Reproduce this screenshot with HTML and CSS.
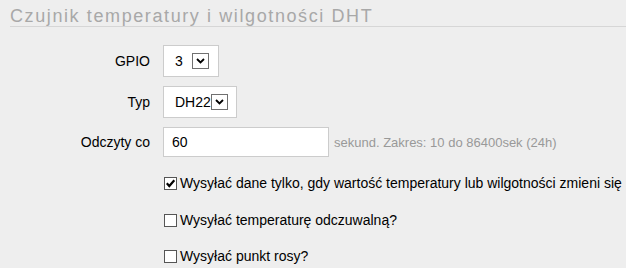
FILE: index.html
```html
<!DOCTYPE html>
<html>
<head>
	<title>Czujnik DHT</title>
	<link rel="stylesheet" href="styles.css">
</head>
<body>
	<div class="section-title">Czujnik temperatury i wilgotności DHT</div>
	<div class="form">
		<div class="form-row">
			<label class="form-label">GPIO</label>
			<div class="select select-gpio">
				<span class="select-value value-gpio">3</span>
				<span class="select-arrow">
					<svg width="9" height="6" viewBox="0 0 9 6"><path d="M1 1 L4.5 4.5 L8 1" fill="none" stroke="#000" stroke-width="1.8"/></svg>
				</span>
			</div>
		</div>
		<div class="form-row row-next">
			<label class="form-label">Typ</label>
			<div class="select select-typ">
				<span class="select-value value-typ">DH22</span>
				<span class="select-arrow">
					<svg width="9" height="6" viewBox="0 0 9 6"><path d="M1 1 L4.5 4.5 L8 1" fill="none" stroke="#000" stroke-width="1.8"/></svg>
				</span>
			</div>
		</div>
		<div class="form-row row-next">
			<label class="form-label" for="interval">Odczyty co</label>
			<input type="text" id="interval" class="text-input" value="60">
			<span class="hint">sekund. Zakres: 10 do 86400sek (24h)</span>
		</div>
		<div class="check-row check-first">
			<span class="checkbox">
				<svg width="11" height="11" viewBox="0 0 11 11"><path d="M1.8 5.3 L4.3 8 L9.3 2.3" fill="none" stroke="#000" stroke-width="2.2"/></svg>
			</span>
			<span class="check-label">Wysyłać dane tylko, gdy wartość temperatury lub wilgotności zmieni się</span>
		</div>
		<div class="check-row check-second">
			<span class="checkbox"></span>
			<span class="check-label">Wysyłać temperaturę odczuwalną?</span>
		</div>
		<div class="check-row check-third">
			<span class="checkbox"></span>
			<span class="check-label">Wysyłać punkt rosy?</span>
		</div>
	</div>
</body>
</html>
```

FILE: styles.css
```css
body {
	margin: 0;
	background-color: #eeeeee;
	font-family: Arial, "Liberation Sans", sans-serif;
	font-size: 14px;
	color: #000;
	overflow: hidden;
}

.section-title {
	margin-left: 10px;
	padding-top: 6px;
	height: 20px;
	border-bottom: 1px solid #d6d6d6;
	font-size: 18px;
	letter-spacing: 1.6px;
	color: #a8a8a8;
	line-height: 20px;
	white-space: nowrap;
}

.form {
	padding-top: 18px;
}

.form-row {
	display: flex;
	align-items: center;
}

.row-next {
	margin-top: 9px;
}

.form-label {
	width: 150px;
	text-align: right;
	margin-right: 13px;
}

.select {
	display: flex;
	align-items: center;
	height: 30px;
	padding-left: 11px;
	background-color: #fff;
	border: 1px solid #cccccc;
}

.select-gpio {
	padding-right: 9px;
}

.select-typ {
	padding-right: 8px;
}

.value-gpio {
	width: 17px;
}

.value-typ {
	width: 36px;
	white-space: nowrap;
}

.select-arrow {
	display: flex;
	align-items: center;
	justify-content: center;
	width: 15px;
	height: 14px;
	border: 1px solid #707070;
	background-color: #fff;
}

.text-input {
	box-sizing: border-box;
	width: 166px;
	height: 30px;
	padding: 0 0 0 8px;
	margin: 0;
	border: 1px solid #cccccc;
	font-family: Arial, "Liberation Sans", sans-serif;
	font-size: 14px;
	color: #000;
	outline: none;
}

.hint {
	margin-left: 5px;
	font-size: 13px;
	color: #999;
}

.check-row {
	display: flex;
	align-items: center;
	height: 16px;
	margin-left: 164px;
}

.check-first {
	margin-top: 18px;
}

.check-second {
	margin-top: 21px;
}

.check-third {
	margin-top: 20px;
}

.checkbox {
	display: flex;
	align-items: center;
	justify-content: center;
	width: 11px;
	height: 11px;
	border: 1px solid #555555;
	background-color: #fff;
	margin-right: 3px;
}

.check-label {
	white-space: nowrap;
	line-height: 16px;
}
```
